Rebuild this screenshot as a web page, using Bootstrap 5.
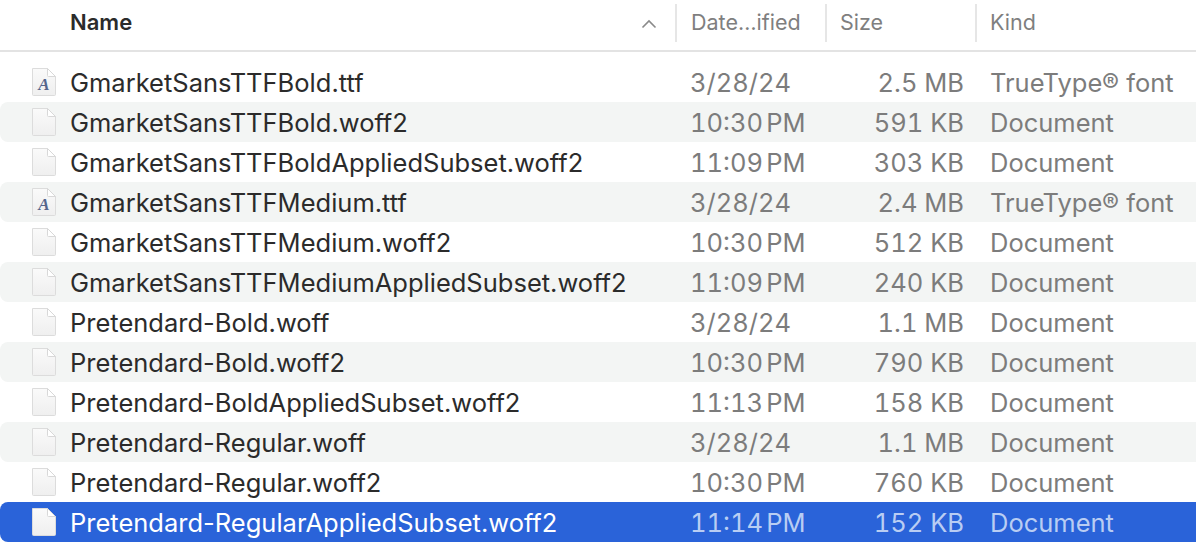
<!DOCTYPE html>
<html lang="en">
<head>
<meta charset="utf-8">
<title>Finder list</title>
<link href="https://cdn.jsdelivr.net/npm/bootstrap@5.3.0/dist/css/bootstrap.min.css" rel="stylesheet">
<style>
html,body{height:552px;overflow:hidden;background:#fff}
body{font-family:Inter,"Liberation Sans",sans-serif;font-size:25.5px;color:#2b2b2b}
.hdr{height:52px;border-bottom:2px solid #e3e3e3;color:#7f7f7f;font-size:21.5px}
.hdr .cell-name{font-weight:600;font-size:22px;color:#2b2b2b;position:relative;padding-bottom:6px}
.cell-name{width:675px;padding-left:70px;white-space:nowrap;flex:none}
.cell-date{width:150px;padding-left:15px;flex:none;white-space:nowrap;font-variant-numeric:tabular-nums;word-spacing:-3.5px}
.cell-size{width:150px;padding-left:15px;flex:none;white-space:nowrap;font-variant-numeric:tabular-nums}
.cell-kind{flex:1;padding-left:16px;white-space:nowrap}
.hcell{height:38px;margin-top:-4px;border-left:2px solid #e6e6e6;line-height:36px}
.hcell.cell-date{padding-left:14px}
.hcell.cell-size{padding-left:13px}
.hcell.cell-kind{padding-left:13px}
.sort{position:absolute;left:641px;top:50%;margin-top:-6px}
.rows{padding-top:10px}
.frow{height:40px;line-height:42px;color:#2b2b2b}
.frow:nth-child(even){background:#f3f5f4;border-radius:8px 0 0 8px}
.frow .cell-date,.frow .cell-size,.frow .cell-kind{color:#7c7c7c}
.frow .cell-size{text-align:right;padding-right:11px;padding-left:0}
.frow .cell-kind{padding-left:15px}
.frow.sel{background:#2a63d9;color:#fff;border-radius:8px 0 0 8px}
.frow.sel .cell-name{color:#fff}
.frow.sel .cell-date,.frow.sel .cell-size,.frow.sel .cell-kind{color:#b9cdf3}
.ico{position:absolute;left:31px;top:5px}
.glyph{font-family:"Liberation Serif",serif;font-style:italic;font-weight:700;font-size:17px;fill:#55658c}
</style>
</head>
<body>
<svg width="0" height="0" class="d-block" aria-hidden="true">
<defs>
<linearGradient id="pg" x1="0" y1="0" x2="0" y2="1"><stop offset="0" stop-color="#fafafa"/><stop offset="1" stop-color="#efefef"/></linearGradient>
<symbol id="doc" viewBox="0 0 26 30">
<path d="M1.5 1.5H16.5L24.5 9.5V27.5Q24.5 28.5 23.5 28.5H2.5Q1.5 28.5 1.5 27.5Z" fill="url(#pg)" stroke="#dcdcdc" stroke-width="1"/>
<path d="M16.5 1.5V8.5Q16.5 9.5 17.5 9.5H24.5Z" fill="#fff" stroke="#d8d8d8" stroke-width="1"/>
</symbol>
</defs>
</svg>
<div class="hdr d-flex align-items-center">
<div class="cell-name h-100 d-flex align-items-center">Name
<svg class="sort" width="16" height="10" viewBox="0 0 16 10"><path d="M1.5 8.5L8 2l6.5 6.5" fill="none" stroke="#8a8a8a" stroke-width="1.6"/></svg></div>
<div class="cell-date hcell">Date…ified</div>
<div class="cell-size hcell">Size</div>
<div class="cell-kind hcell">Kind</div>
</div>
<div class="rows" id="rows">
<div class="frow d-flex position-relative"><svg class="ico" width="26" height="30"><use href="#doc"/><text x="13" y="23" text-anchor="middle" class="glyph">A</text></svg><div class="cell-name">GmarketSansTTFBold.ttf</div><div class="cell-date">3/28/24</div><div class="cell-size">2.5 MB</div><div class="cell-kind">TrueType® font</div></div>
<div class="frow d-flex position-relative"><svg class="ico" width="26" height="30"><use href="#doc"/></svg><div class="cell-name">GmarketSansTTFBold.woff2</div><div class="cell-date">10:30 PM</div><div class="cell-size">591 KB</div><div class="cell-kind">Document</div></div>
<div class="frow d-flex position-relative"><svg class="ico" width="26" height="30"><use href="#doc"/></svg><div class="cell-name">GmarketSansTTFBoldAppliedSubset.woff2</div><div class="cell-date">11:09 PM</div><div class="cell-size">303 KB</div><div class="cell-kind">Document</div></div>
<div class="frow d-flex position-relative"><svg class="ico" width="26" height="30"><use href="#doc"/><text x="13" y="23" text-anchor="middle" class="glyph">A</text></svg><div class="cell-name">GmarketSansTTFMedium.ttf</div><div class="cell-date">3/28/24</div><div class="cell-size">2.4 MB</div><div class="cell-kind">TrueType® font</div></div>
<div class="frow d-flex position-relative"><svg class="ico" width="26" height="30"><use href="#doc"/></svg><div class="cell-name">GmarketSansTTFMedium.woff2</div><div class="cell-date">10:30 PM</div><div class="cell-size">512 KB</div><div class="cell-kind">Document</div></div>
<div class="frow d-flex position-relative"><svg class="ico" width="26" height="30"><use href="#doc"/></svg><div class="cell-name">GmarketSansTTFMediumAppliedSubset.woff2</div><div class="cell-date">11:09 PM</div><div class="cell-size">240 KB</div><div class="cell-kind">Document</div></div>
<div class="frow d-flex position-relative"><svg class="ico" width="26" height="30"><use href="#doc"/></svg><div class="cell-name">Pretendard-Bold.woff</div><div class="cell-date">3/28/24</div><div class="cell-size">1.1 MB</div><div class="cell-kind">Document</div></div>
<div class="frow d-flex position-relative"><svg class="ico" width="26" height="30"><use href="#doc"/></svg><div class="cell-name">Pretendard-Bold.woff2</div><div class="cell-date">10:30 PM</div><div class="cell-size">790 KB</div><div class="cell-kind">Document</div></div>
<div class="frow d-flex position-relative"><svg class="ico" width="26" height="30"><use href="#doc"/></svg><div class="cell-name">Pretendard-BoldAppliedSubset.woff2</div><div class="cell-date">11:13 PM</div><div class="cell-size">158 KB</div><div class="cell-kind">Document</div></div>
<div class="frow d-flex position-relative"><svg class="ico" width="26" height="30"><use href="#doc"/></svg><div class="cell-name">Pretendard-Regular.woff</div><div class="cell-date">3/28/24</div><div class="cell-size">1.1 MB</div><div class="cell-kind">Document</div></div>
<div class="frow d-flex position-relative"><svg class="ico" width="26" height="30"><use href="#doc"/></svg><div class="cell-name">Pretendard-Regular.woff2</div><div class="cell-date">10:30 PM</div><div class="cell-size">760 KB</div><div class="cell-kind">Document</div></div>
<div class="frow sel d-flex position-relative"><svg class="ico" width="26" height="30"><use href="#doc"/></svg><div class="cell-name">Pretendard-RegularAppliedSubset.woff2</div><div class="cell-date">11:14 PM</div><div class="cell-size">152 KB</div><div class="cell-kind">Document</div></div>
</div>
<script src="https://cdn.jsdelivr.net/npm/bootstrap@5.3.0/dist/js/bootstrap.bundle.min.js"></script>
</body>
</html>
